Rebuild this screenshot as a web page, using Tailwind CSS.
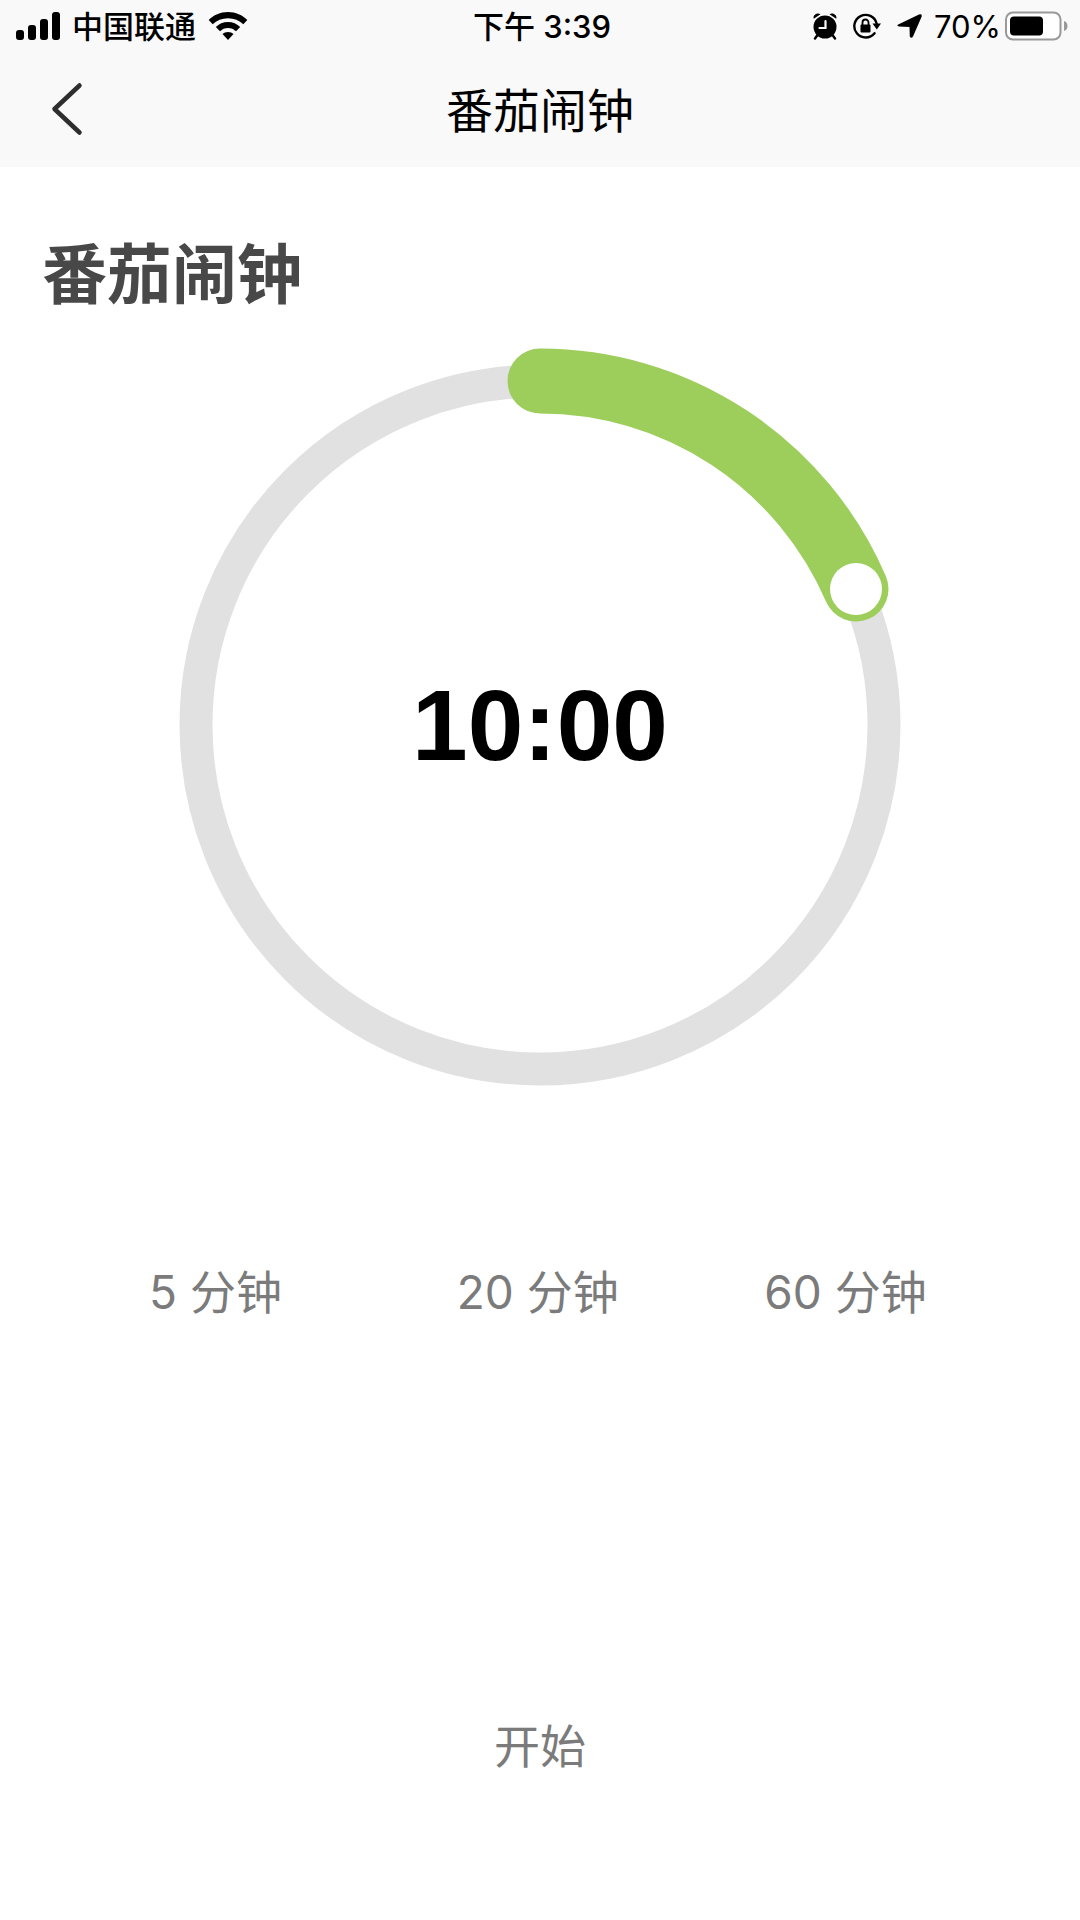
<!DOCTYPE html>
<html lang="zh-CN">
<head>
<meta charset="utf-8">
<meta name="viewport" content="width=device-width, initial-scale=1">
<title>番茄闹钟</title>
<script src="https://cdn.jsdelivr.net/npm/@tailwindcss/browser@4"></script>
</head>
<body class="min-h-screen bg-white font-['Inter','Noto_Sans_CJK_SC',sans-serif] text-black">
<header class="bg-[#f9f9f9]">
  <div class="grid h-[50px] grid-cols-[1fr_auto_1fr] items-center pr-3 pl-4 text-[31px] leading-[50px]">
    <div class="flex items-center gap-3">
      <svg class="h-7 w-11 shrink-0" viewBox="0 0 44 28" aria-label="信号">
        <rect x="0" y="18" width="8" height="10" rx="3"/>
        <rect x="12" y="13" width="8" height="15" rx="3"/>
        <rect x="24" y="7" width="8" height="21" rx="3"/>
        <rect x="36" y="0" width="8" height="28" rx="3"/>
      </svg>
      <span class="pt-0.5 font-medium">中国联通</span>
      <svg class="h-7 w-10 shrink-0" viewBox="0 0 40 28" aria-label="无线网络">
        <path d="M20 0C12.400 0 5.400 3 .7 8L4.700 12.300C8.700 8.300 14 6.200 20 6.200S31.300 8.300 35.300 12.300L39.300 8C34.600 3 27.600 0 20 0Z"/>
        <path d="M20 10C15.200 10 10.900 11.900 7.800 15L12 19.300C14.100 17.200 16.900 16 20 16S25.900 17.200 28 19.300L32.200 15C29.100 11.900 24.800 10 20 10Z"/>
        <path d="M20 20C17.800 20 15.900 20.800 14.500 22.100L20 28L25.500 22.100C24.100 20.800 22.200 20 20 20Z"/>
      </svg>
    </div>
    <time class="pt-0.5 font-medium">下午 3:39</time>
    <div class="flex items-center justify-end">
      <svg class="mr-4 h-[27px] w-6 shrink-0" viewBox="0 0 24 27" aria-label="闹钟">
        <circle cx="12" cy="14" r="11.500"/>
        <path d="M.8 5.800C-.6 2.400 4.200-1.200 7.500 1.200ZM23.200 5.800C24.600 2.400 19.800-1.200 16.500 1.200Z"/>
        <path d="M4.500 22L2 25.500M19.500 22L22 25.500" stroke="#000" stroke-width="2.400" stroke-linecap="round"/>
        <path d="M12.500 8V15H6.500" fill="none" stroke="#f9f9f9" stroke-width="2.200" stroke-linecap="round"/>
      </svg>
      <svg class="mr-4 h-[26px] w-7 shrink-0" viewBox="0 0 28 26" aria-label="方向锁定">
        <path d="M21.500 20.200A11.300 11.300 0 1 1 23.600 10.500" fill="none" stroke="#000" stroke-width="2.400" stroke-linecap="round"/>
        <path d="M19.500 10.500H28L23.800 16.500Z"/>
        <rect x="7.500" y="11.500" width="10" height="8" rx="1"/>
        <path d="M9.500 12V9.500a3 3 0 0 1 6 0V12" fill="none" stroke="#000" stroke-width="1.800"/>
      </svg>
      <svg class="mr-3 h-6 w-[25px] shrink-0" viewBox="0 0 25 24" aria-label="定位">
        <path d="M1.200 10.400L22 .4Q25.400-.6 24.600 2.800L16 22.500Q14.200 25 12.800 22.500L12.500 13L2 12.500Q-.8 11.700 1.200 10.400Z"/>
      </svg>
      <span class="mr-1 pt-0.5">70%</span>
      <svg class="h-[30px] w-[63px] shrink-0" viewBox="0 0 63 30" aria-label="电池">
        <rect x="1" y="1.500" width="54.500" height="27" rx="7" fill="#fff" stroke="#999" stroke-width="2"/>
        <rect x="5" y="5.500" width="33" height="19" rx="4"/>
        <path d="M59 10Q62.500 11 62.500 15T59 20Z" fill="#999"/>
      </svg>
    </div>
  </div>
  <nav class="grid h-[117px] grid-cols-[1fr_auto_1fr] items-center px-12">
    <button type="button" aria-label="返回" class="w-10">
      <svg class="h-[54px] w-9" viewBox="0 0 36 54"><path d="M31.500 3.500L6.500 27L31.500 50.500" fill="none" stroke="#2e2e2e" stroke-width="4.500" stroke-linecap="round" stroke-linejoin="round"/></svg>
    </button>
    <span class="pt-1 text-[47px] leading-[64px]">番茄闹钟</span>
  </nav>
</header>
<main>
  <h1 class="px-[42px] pt-[62px] text-[65px] leading-[92px] font-bold text-[#484848]">番茄闹钟</h1>
  <div class="mx-auto mt-6 grid w-2/3 place-items-center">
    <svg class="col-start-1 row-start-1 w-full overflow-visible" viewBox="0 0 720 760" role="img" aria-label="计时进度">
      <circle cx="360" cy="380" r="344" fill="none" stroke="#e1e1e1" stroke-width="33"/>
      <path d="M360 36A344 344 0 0 1 676 244" fill="none" stroke="#9dcd5a" stroke-width="65" stroke-linecap="round"/>
      <circle cx="676" cy="244" r="26" fill="#fff"/>
    </svg>
    <time class="col-start-1 row-start-1 font-['Liberation_Sans',sans-serif] text-[100px] leading-[120px] font-bold">10:00</time>
  </div>
  <div class="mt-[155px] grid grid-cols-3 justify-items-start pr-2 pl-[149px] text-[46px] leading-[64px] text-[#7b7b7b]">
    <button type="button">5 分钟</button>
    <button type="button">20 分钟</button>
    <button type="button">60 分钟</button>
  </div>
  <div class="mt-[390px] flex justify-center pb-12 text-[46px] leading-[64px] text-[#7b7b7b]">
    <button type="button">开始</button>
  </div>
</main>
</body>
</html>
